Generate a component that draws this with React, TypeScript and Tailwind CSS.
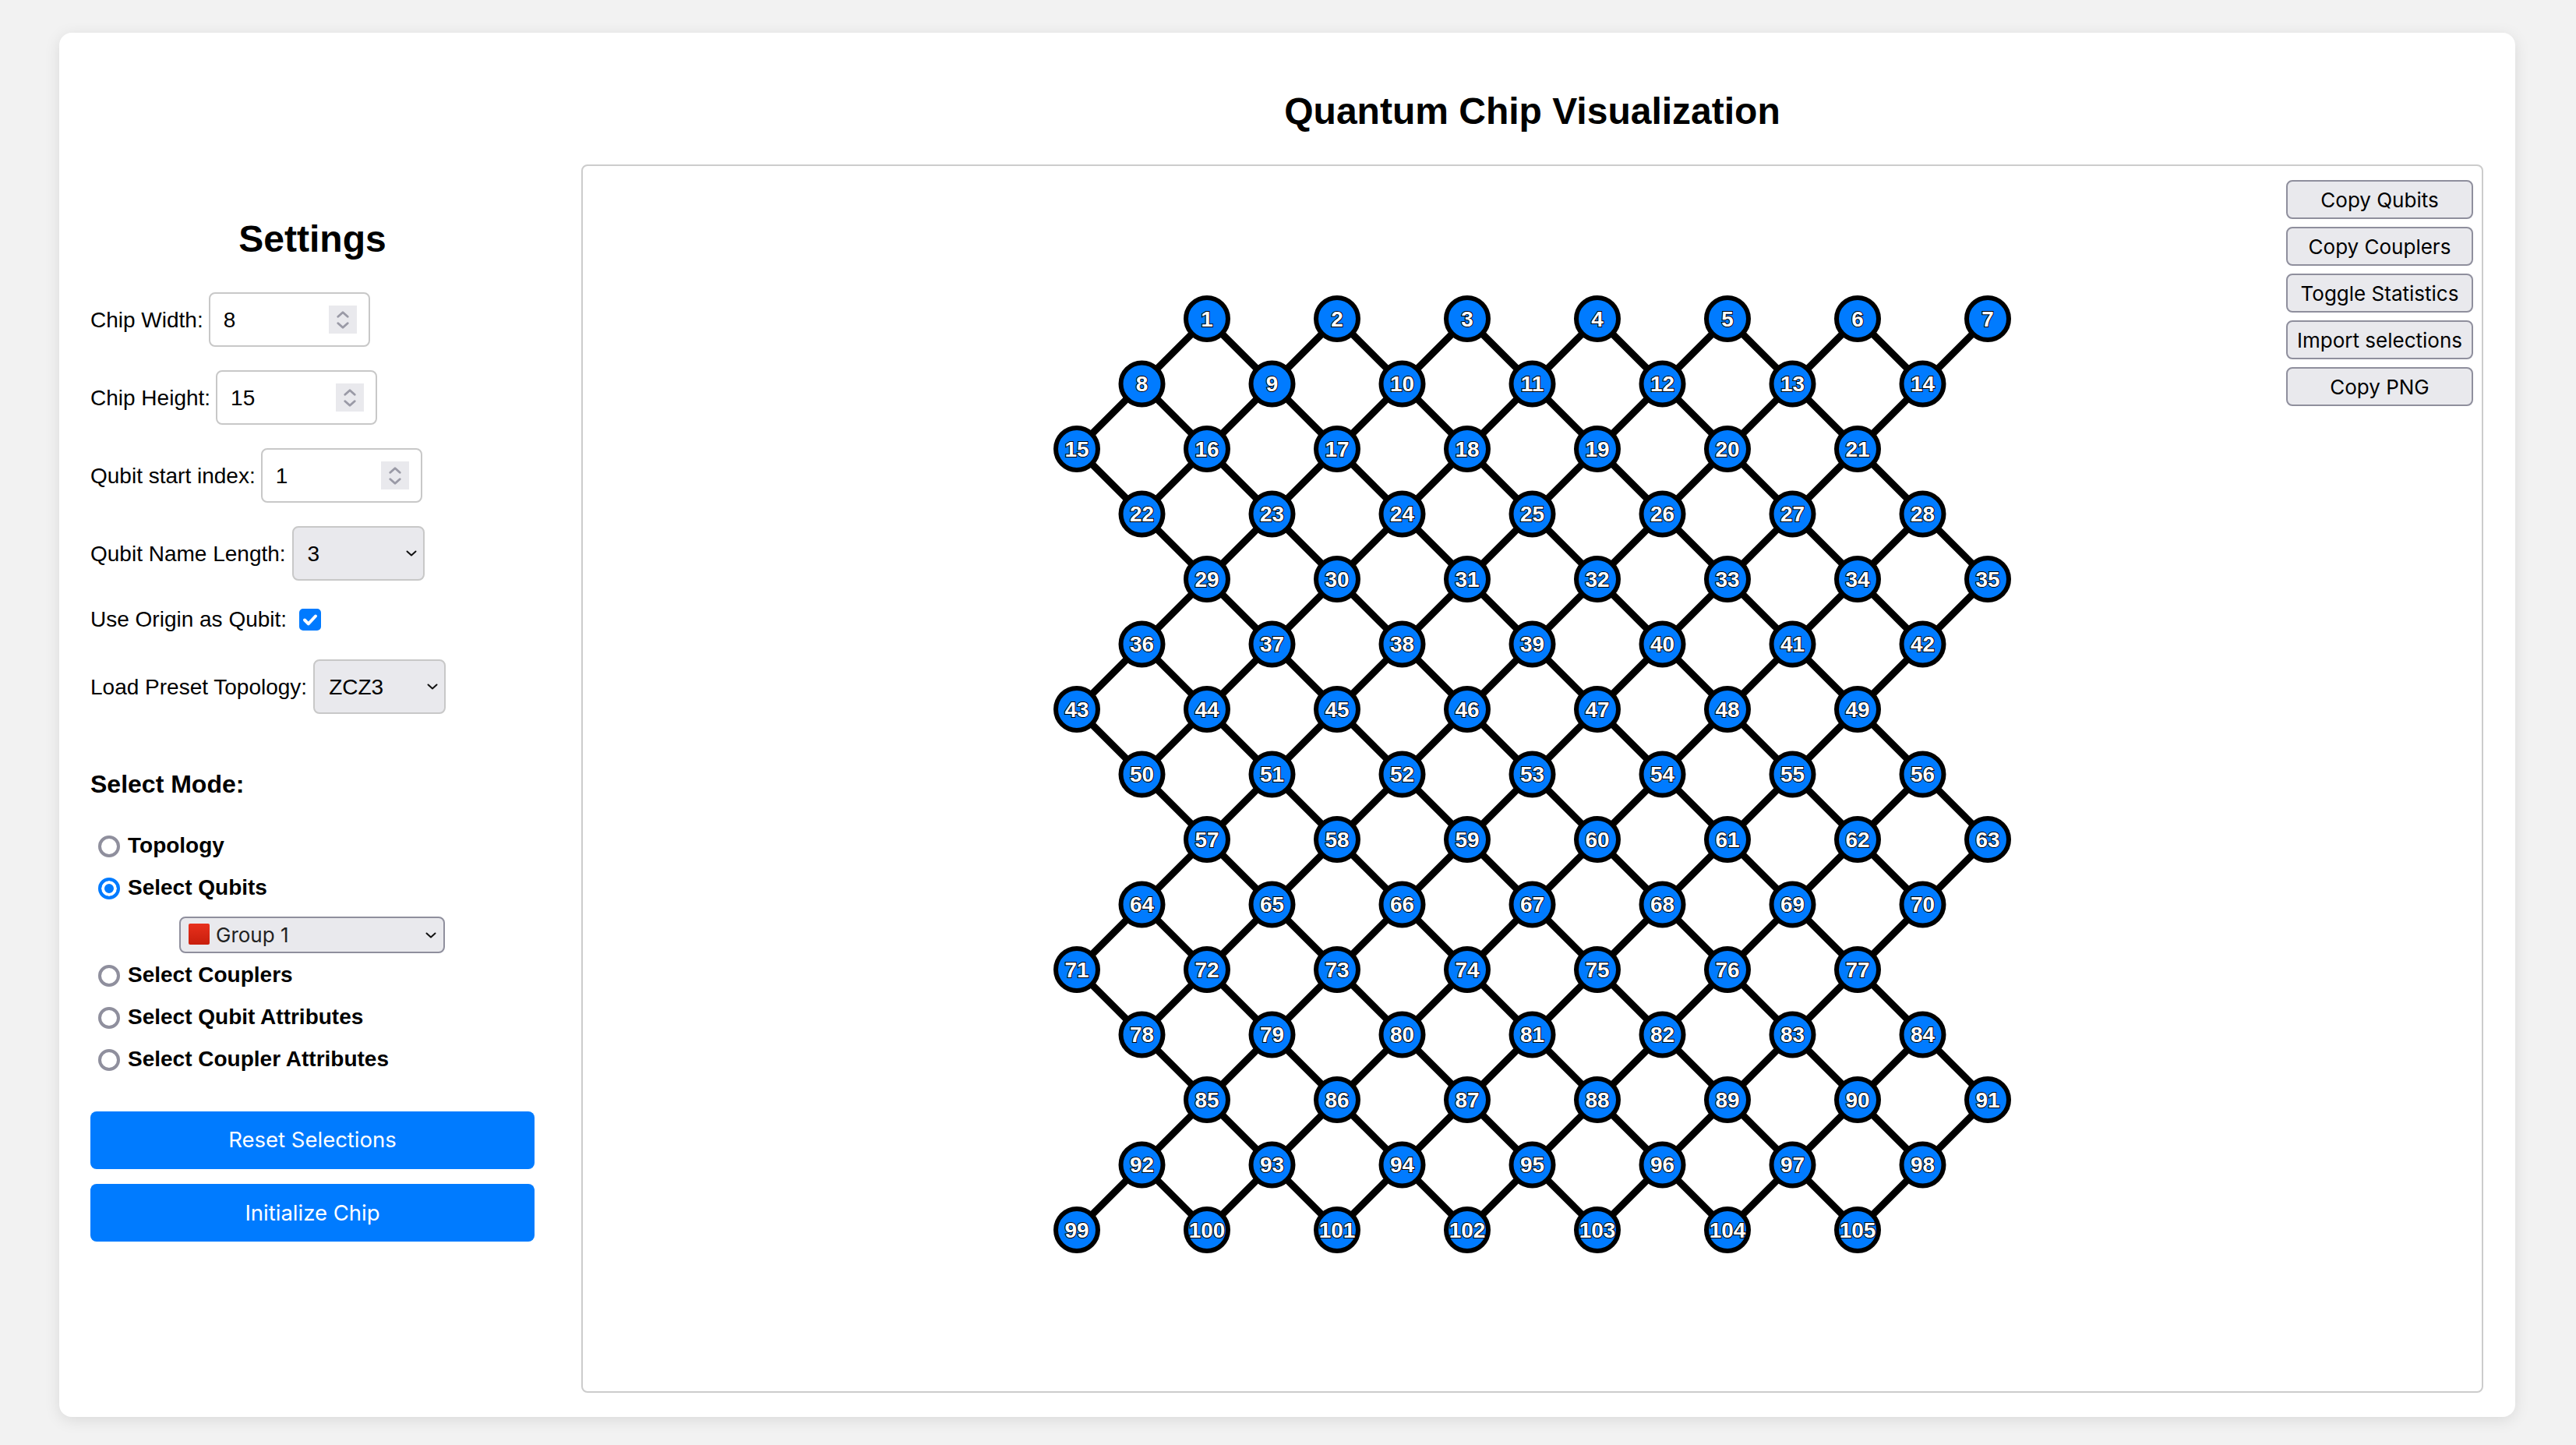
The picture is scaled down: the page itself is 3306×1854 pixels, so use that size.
import React, { useMemo, useState } from 'react';

type Mode = 'topology' | 'qubits' | 'couplers' | 'qubitAttrs' | 'couplerAttrs';

interface QubitNode {
  id: number;
  col: number;
  row: number;
}

// first column of each row, in half steps, following the zigzag of the chip
const rowOffsets = [2, 1, 0, 1, 2, 1, 0, 1, 2, 1, 0, 1, 2, 1, 0];
const STEP = 83.5;
const ORIGIN_X = 634;
const ORIGIN_Y = 196;

const modes: { value: Mode; label: string }[] = [
  { value: 'topology', label: 'Topology' },
  { value: 'qubits', label: 'Select Qubits' },
  { value: 'couplers', label: 'Select Couplers' },
  { value: 'qubitAttrs', label: 'Select Qubit Attributes' },
  { value: 'couplerAttrs', label: 'Select Coupler Attributes' },
];

const toolButtons = ['Copy Qubits', 'Copy Couplers', 'Toggle Statistics', 'Import selections', 'Copy PNG'];

const Chevron: React.FC<{ className: string; strokeWidth?: number }> = ({ className, strokeWidth = 2 }) => (
  <svg viewBox="0 0 14 8" fill="none" stroke="currentColor" strokeWidth={strokeWidth} strokeLinecap="round" strokeLinejoin="round" className={className}>
    <path d="M1.5 1.5 7 6.5l5.5-5" />
  </svg>
);

const NumberField: React.FC<{ label: string; value: number; onChange: (v: number) => void }> = ({ label, value, onChange }) => (
  <div className="flex items-center h-[70px] mb-[30px]">
    <label className="mr-[7px] pt-[2px]">{label}</label>
    <div className="relative">
      <input
        type="number"
        value={value}
        onChange={e => onChange(Number(e.target.value))}
        className="block w-[207px] h-[70px] pl-[17px] pt-[2px] border-2 border-[#c8c8c8] rounded-lg bg-white outline-none [appearance:textfield] [&::-webkit-inner-spin-button]:appearance-none"
      />
      <div className="absolute right-[17px] top-[17px] w-9 h-9 bg-[#e9e9ed] flex flex-col items-center justify-center gap-[5px] text-[#9a9aa6] pointer-events-none">
        <Chevron className="w-[16px] h-[9px] rotate-180" strokeWidth={2.5} />
        <Chevron className="w-[16px] h-[9px]" strokeWidth={2.5} />
      </div>
    </div>
  </div>
);

const SelectField: React.FC<{ label: string; value: string; options: string[]; onChange: (v: string) => void; last?: boolean }> = ({ label, value, options, onChange, last }) => (
  <div className={`flex items-center h-[70px] ${last ? '' : 'mb-[30px]'}`}>
    <label className="mr-[8px] pt-[2px]">{label}</label>
    <div className="relative">
      <select
        value={value}
        onChange={e => onChange(e.target.value)}
        className="block w-[170px] h-[70px] pl-[18px] pt-[2px] border-2 border-[#c8c8c8] rounded-lg bg-[#e9e9ed] outline-none appearance-none"
      >
        {options.map(o => (
          <option key={o} value={o}>{o}</option>
        ))}
      </select>
      <Chevron className="absolute right-[10px] top-[31px] w-[14px] h-2 text-[#111] pointer-events-none" />
    </div>
  </div>
);

const App: React.FC = () => {
  const [chipWidth, setChipWidth] = useState(8);
  const [chipHeight, setChipHeight] = useState(15);
  const [startIndex, setStartIndex] = useState(1);
  const [nameLength, setNameLength] = useState('3');
  const [useOrigin, setUseOrigin] = useState(true);
  const [preset, setPreset] = useState('ZCZ3');
  const [mode, setMode] = useState<Mode>('qubits');
  const [group, setGroup] = useState('Group 1');

  const { nodes, edges } = useMemo(() => {
    const list: QubitNode[] = [];
    rowOffsets.forEach((offset, row) => {
      for (let i = 0; i < 7; i++) {
        list.push({ id: row * 7 + i + 1, col: offset + i * 2, row });
      }
    });
    const links: [QubitNode, QubitNode][] = [];
    list.forEach(a => {
      list.forEach(b => {
        if (b.row === a.row + 1 && Math.abs(b.col - a.col) === 1) links.push([a, b]);
      });
    });
    return { nodes: list, edges: links };
  }, []);

  return (
    <div className="min-h-[1854px] bg-[#f2f2f2] pt-[42px] pl-[76px] font-['Liberation_Sans',Arial,sans-serif] text-[28px] text-black">
      <div className="flex w-[3152px] h-[1776px] pl-10 pr-[41px] pb-[31px] bg-white rounded-2xl shadow-[0_4px_20px_rgba(0,0,0,0.1)]">
        <aside className="w-[570px] mr-[60px] pt-[237px] shrink-0">
          <h2 className="text-[48px] leading-[56px] font-bold text-center mb-[40px]">Settings</h2>
          <NumberField label="Chip Width:" value={chipWidth} onChange={setChipWidth} />
          <NumberField label="Chip Height:" value={chipHeight} onChange={setChipHeight} />
          <NumberField label="Qubit start index:" value={startIndex} onChange={setStartIndex} />
          <SelectField label="Qubit Name Length:" value={nameLength} options={['2', '3', '4']} onChange={setNameLength} />
          <div className="flex items-center h-10 mb-[31px]">
            <label className="mr-[16px]">Use Origin as Qubit:</label>
            <div className="relative w-7 h-7">
              <input
                type="checkbox"
                checked={useOrigin}
                onChange={e => setUseOrigin(e.target.checked)}
                className="block w-7 h-7 appearance-none rounded-[5px] border-2 border-[#8f8f9d] checked:border-[#007aff] checked:bg-[#007aff]"
              />
              {useOrigin && (
                <svg viewBox="0 0 28 28" fill="none" stroke="white" strokeWidth="4" strokeLinecap="round" strokeLinejoin="round" className="absolute inset-0 pointer-events-none">
                  <path d="M7 14.5l4.8 4.8L21 9.5" />
                </svg>
              )}
            </div>
          </div>
          <SelectField label="Load Preset Topology:" value={preset} options={['ZCZ3', 'ZCZ2', 'Grid']} onChange={setPreset} last />

          <h3 className="text-[32px] leading-9 font-bold mt-[72px] mb-[35px]">Select Mode:</h3>
          {modes.map(m => (
            <React.Fragment key={m.value}>
              <label className="flex items-center h-[54px] ml-[10px] font-bold">
                <input
                  type="radio"
                  name="mode"
                  checked={mode === m.value}
                  onChange={() => setMode(m.value)}
                  className="w-7 h-7 mr-[10px] appearance-none rounded-full border-[4px] border-[#8f8f9d] bg-white checked:border-[#007bff] checked:bg-[#007bff] checked:shadow-[inset_0_0_0_4px_white]"
                />
                <span className="pb-[3px]">{m.label}</span>
              </label>
              {m.value === 'qubits' && (
                <div className="relative w-[341px] h-[47px] ml-[114px] mt-[9px] mb-[2px] font-['Inter',sans-serif]">
                  <select
                    value={group}
                    onChange={e => setGroup(e.target.value)}
                    className="block w-full h-full pl-[45px] border-2 border-[#8f8f9d] rounded-lg bg-[#e9e9ed] text-[26px] text-[#222] outline-none appearance-none"
                  >
                    <option>Group 1</option>
                    <option>Group 2</option>
                    <option>Group 3</option>
                  </select>
                  <span className="absolute left-[12px] top-[9px] w-[27px] h-[27px] rounded-[2px] bg-gradient-to-b from-[#e8301c] to-[#c81e0c] pointer-events-none" />
                  <Chevron className="absolute right-[11px] top-[20px] w-[14px] h-2 text-[#111] pointer-events-none" />
                </div>
              )}
            </React.Fragment>
          ))}

          <button className="block w-full h-[74px] mt-[39px] rounded-lg bg-[#007bff] text-white font-['Inter',sans-serif] text-[27.5px]">Reset Selections</button>
          <button className="block w-full h-[74px] mt-[19px] pt-[2px] rounded-lg bg-[#007bff] text-white font-['Inter',sans-serif] text-[27.5px]">Initialize Chip</button>
        </aside>

        <main className="flex-1 flex flex-col min-w-0">
          <h1 className="text-[48px] leading-[56px] font-bold text-center pt-[73px] mb-[40px]">Quantum Chip Visualization</h1>
          <div className="relative flex-1 border-2 border-[#ccc] rounded-lg">
            <svg viewBox="0 0 2437 1572" className="block w-full h-full">
              {edges.map(([a, b]) => (
                <line
                  key={`${a.id}-${b.id}`}
                  x1={ORIGIN_X + a.col * STEP}
                  y1={ORIGIN_Y + a.row * STEP}
                  x2={ORIGIN_X + b.col * STEP}
                  y2={ORIGIN_Y + b.row * STEP}
                  stroke="black"
                  strokeWidth="9"
                />
              ))}
              {nodes.map(n => (
                <g key={n.id}>
                  <circle cx={ORIGIN_X + n.col * STEP} cy={ORIGIN_Y + n.row * STEP} r="27" fill="#007bff" stroke="black" strokeWidth="6" />
                  <text
                    x={ORIGIN_X + n.col * STEP}
                    y={ORIGIN_Y + n.row * STEP}
                    dy="9.5"
                    textAnchor="middle"
                    fill="white"
                    stroke="black"
                    strokeWidth="2"
                    paintOrder="stroke"
                    fontSize="28"
                    fontWeight="700"
                  >
                    {n.id}
                  </text>
                </g>
              ))}
            </svg>
            <div className="absolute right-[11px] top-[18px] flex flex-col gap-[10px] w-[240px] font-['Inter',sans-serif]">
              {toolButtons.map(label => (
                <button key={label} className="h-[50px] pt-[1px] border-2 border-[#8f8f9d] rounded-lg bg-[#e9e9ed] text-[26px] leading-none whitespace-nowrap">
                  {label}
                </button>
              ))}
            </div>
          </div>
        </main>
      </div>
    </div>
  );
};

export default App;
